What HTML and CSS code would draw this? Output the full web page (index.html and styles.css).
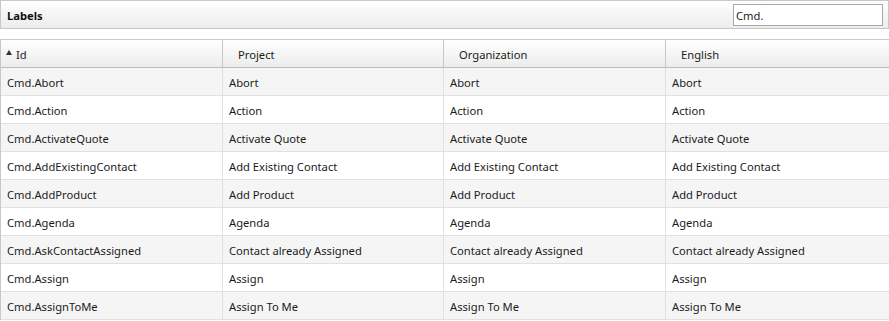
FILE: index.html
```html
<!DOCTYPE html>
<html>
<head>
<meta charset="utf-8">
<link rel="stylesheet" href="styles.css">
</head>
<body>
<div class="titlebar">
  <span class="title">Labels</span>
  <input class="search" type="text" value="Cmd.">
</div>
<div class="grid">
  <div class="hrow">
    <div class="hcell first"><span class="sort"></span>Id</div>
    <div class="hcell">Project</div>
    <div class="hcell">Organization</div>
    <div class="hcell">English</div>
  </div>
  <div class="row alt"><div class="cell">Cmd.Abort</div><div class="cell">Abort</div><div class="cell">Abort</div><div class="cell">Abort</div></div>
  <div class="row"><div class="cell">Cmd.Action</div><div class="cell">Action</div><div class="cell">Action</div><div class="cell">Action</div></div>
  <div class="row alt"><div class="cell">Cmd.ActivateQuote</div><div class="cell">Activate Quote</div><div class="cell">Activate Quote</div><div class="cell">Activate Quote</div></div>
  <div class="row"><div class="cell">Cmd.AddExistingContact</div><div class="cell">Add Existing Contact</div><div class="cell">Add Existing Contact</div><div class="cell">Add Existing Contact</div></div>
  <div class="row alt"><div class="cell">Cmd.AddProduct</div><div class="cell">Add Product</div><div class="cell">Add Product</div><div class="cell">Add Product</div></div>
  <div class="row"><div class="cell">Cmd.Agenda</div><div class="cell">Agenda</div><div class="cell">Agenda</div><div class="cell">Agenda</div></div>
  <div class="row alt"><div class="cell">Cmd.AskContactAssigned</div><div class="cell">Contact already Assigned</div><div class="cell">Contact already Assigned</div><div class="cell">Contact already Assigned</div></div>
  <div class="row"><div class="cell">Cmd.Assign</div><div class="cell">Assign</div><div class="cell">Assign</div><div class="cell">Assign</div></div>
  <div class="row alt"><div class="cell">Cmd.AssignToMe</div><div class="cell">Assign To Me</div><div class="cell">Assign To Me</div><div class="cell">Assign To Me</div></div>
</div>
</body>
</html>
```
FILE: styles.css
```css
html, body {
  margin: 0;
  padding: 0;
  background: #ffffff;
  font-family: "Noto Sans", "Open Sans", sans-serif;
  font-size: 11.2px;
  color: #1b1b1b;
  overflow: hidden;
}

.titlebar {
  display: flex;
  align-items: center;
  justify-content: space-between;
  height: 27px;
  border: 1px solid #c8c8c8;
  background: linear-gradient(#ffffff, #ececec);
  padding: 0 5px 0 6px;
}

.title {
  font-weight: bold;
  color: #111;
  padding-top: 2px;
}

.search {
  box-sizing: border-box;
  width: 150px;
  height: 22px;
  margin-top: 1px;
  border: 1px solid #a8a8a8;
  padding: 0 2px;
  font: inherit;
  color: #1b1b1b;
  background: #fff;
}

.grid {
  margin-top: 10px;
  width: 888px;
  border-left: 1px solid #c8c8c8;
  border-right: 1px solid #c8c8c8;
}

.hrow, .row {
  display: grid;
  grid-template-columns: 222px 221px 222px 1fr;
}

.hrow {
  height: 27px;
  border-top: 1px solid #c8c8c8;
  border-bottom: 1px solid #bdbdbd;
  background: linear-gradient(#ffffff, #ececec);
}

.hcell {
  display: flex;
  align-items: center;
  padding-left: 15px;
  padding-top: 1px;
  border-right: 1px solid #c8c8c8;
}

.hcell:last-child {
  border-right: none;
}

.hcell.first {
  padding-left: 5px;
}

.sort {
  width: 0;
  height: 0;
  border-left: 3.5px solid transparent;
  border-right: 3.5px solid transparent;
  border-bottom: 5px solid #333;
  margin-right: 4px;
  margin-top: -3px;
}

.row {
  height: 27px;
  border-bottom: 1px solid #e0e0e0;
  background: #ffffff;
}

.row.alt {
  background: #f5f5f5;
}

.cell {
  display: flex;
  align-items: center;
  padding-left: 6px;
  padding-top: 1px;
  border-right: 1px solid #e0e0e0;
  white-space: nowrap;
}

.cell:last-child {
  border-right: none;
}
```
